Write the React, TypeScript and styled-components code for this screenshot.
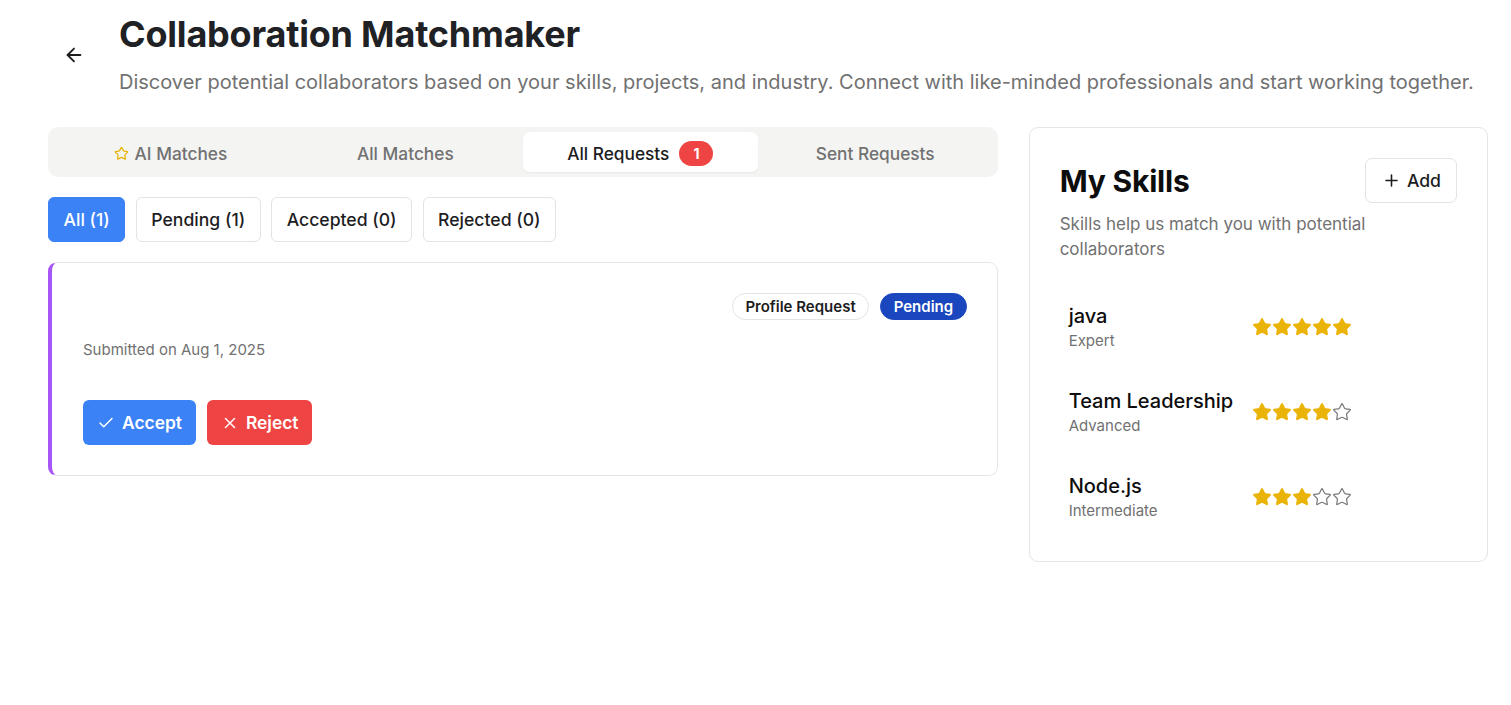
import React from "react";
import styled, { createGlobalStyle } from "styled-components";
import { ArrowLeft, Star, Check, X, Plus } from "lucide-react";

const GlobalStyle = createGlobalStyle`
  * { box-sizing: border-box; }
  body {
    margin: 0;
    background: #ffffff;
    font-family: Inter, "Noto Sans", "Liberation Sans", sans-serif;
    color: #1d1d1f;
  }
`;

const Page = styled.div`
  padding: 14px 23px 40px 48px;
`;

const Header = styled.header`
  display: flex;
  align-items: center;
  gap: 26px;
  padding-left: 7px;
`;

const BackButton = styled.button`
  width: 38px;
  height: 38px;
  display: flex;
  align-items: center;
  justify-content: center;
  border: none;
  background: transparent;
  color: #1d1d1f;
  padding: 0;
`;

const TitleBlock = styled.div`
  display: flex;
  flex-direction: column;
  gap: 14px;
`;

const Title = styled.h1`
  margin: 0;
  font-size: 36px;
  line-height: 40px;
  font-weight: 700;
  color: #202124;
  letter-spacing: -0.2px;
`;

const Subtitle = styled.p`
  margin: 0;
  font-size: 20px;
  line-height: 28px;
  color: #717171;
`;

const Grid = styled.div`
  display: grid;
  grid-template-columns: repeat(3, 1fr);
  gap: 31px;
  margin-top: 31px;
  align-items: start;
`;

const MainColumn = styled.div`
  grid-column: span 2;
  display: flex;
  flex-direction: column;
`;

const TabBar = styled.div`
  display: grid;
  grid-template-columns: repeat(4, 1fr);
  height: 50px;
  padding: 5px;
  background: #f4f4f3;
  border-radius: 10px;
`;

const Tab = styled.div<{ $active?: boolean }>`
  display: flex;
  align-items: center;
  justify-content: center;
  gap: 6px;
  padding-top: 2px;
  font-size: 17.3px;
  font-weight: 500;
  border-radius: 7px;
  color: ${(p) => (p.$active ? "#1d1d1f" : "#717171")};
  background: ${(p) => (p.$active ? "#ffffff" : "transparent")};
  box-shadow: ${(p) => (p.$active ? "0 1px 2px rgba(0,0,0,0.05)" : "none")};
`;

const CountBadge = styled.span`
  min-width: 34px;
  height: 25px;
  padding: 0 10px;
  margin-left: 4px;
  border-radius: 13px;
  background: #ef4444;
  color: #fff;
  font-size: 14px;
  font-weight: 700;
  display: inline-flex;
  align-items: center;
  justify-content: center;
`;

const FilterRow = styled.div`
  display: flex;
  gap: 10.5px;
  margin-top: 20px;
`;

const FilterButton = styled.button<{ $active?: boolean }>`
  height: 45px;
  padding: 0 14.5px;
  border-radius: 6px;
  font-family: inherit;
  font-size: 17.6px;
  font-weight: 500;
  border: 1px solid ${(p) => (p.$active ? "#3b82f6" : "#e3e3e3")};
  background: ${(p) => (p.$active ? "#3b82f6" : "#ffffff")};
  color: ${(p) => (p.$active ? "#ffffff" : "#1d1d1f")};
`;

const RequestCard = styled.div`
  margin-top: 20px;
  border: 1px solid #e5e5e5;
  border-left: 4px solid #a855f7;
  border-radius: 9px;
  padding: 30px 30px 30px 31px;
`;

const CardTop = styled.div`
  display: flex;
  justify-content: flex-end;
  gap: 11px;
`;

const Pill = styled.span<{ $tone: "outline" | "blue" }>`
  height: 27px;
  padding: 0 12.5px;
  border-radius: 14px;
  display: inline-flex;
  align-items: center;
  font-size: 15px;
  font-weight: 600;
  border: 1px solid ${(p) => (p.$tone === "blue" ? "#1a47be" : "#e3e3e3")};
  background: ${(p) => (p.$tone === "blue" ? "#1a47be" : "#ffffff")};
  color: ${(p) => (p.$tone === "blue" ? "#ffffff" : "#1d1d1f")};
`;

const Submitted = styled.p`
  margin: 19px 0 0;
  font-size: 15px;
  line-height: 22px;
  color: #717171;
`;

const Actions = styled.div`
  display: flex;
  gap: 11px;
  margin-top: 39px;
`;

const ActionButton = styled.button<{ $kind: "accept" | "reject" }>`
  height: 45px;
  padding: 0 14px;
  display: inline-flex;
  align-items: center;
  gap: 7px;
  border: none;
  border-radius: 6px;
  font-family: inherit;
  font-size: 17.4px;
  font-weight: 600;
  color: #ffffff;
  background: ${(p) => (p.$kind === "accept" ? "#3b82f6" : "#ef4444")};
`;

const SideCard = styled.aside`
  border: 1px solid #e5e5e5;
  border-radius: 9px;
  padding: 30px;
`;

const SideHeader = styled.div`
  display: flex;
  align-items: center;
  justify-content: space-between;
`;

const SideTitle = styled.h2`
  margin: 0;
  font-size: 30px;
  font-weight: 700;
  color: #0d0d0d;
  letter-spacing: -0.2px;
`;

const AddButton = styled.button`
  height: 45px;
  padding: 0 15px 0 16px;
  display: inline-flex;
  align-items: center;
  gap: 6px;
  border: 1px solid #e3e3e3;
  border-radius: 7px;
  background: #fff;
  font-family: inherit;
  font-size: 17.6px;
  font-weight: 500;
  color: #1d1d1f;
`;

const SideText = styled.p`
  margin: 9px 0 0;
  font-size: 17px;
  line-height: 25px;
  color: #717171;
`;

const SkillList = styled.div`
  display: flex;
  flex-direction: column;
  gap: 16px;
  margin-top: 30px;
`;

const SkillRow = styled.div`
  display: grid;
  grid-template-columns: 163px auto;
  gap: 20px;
  align-items: center;
  padding: 10px 9px;
`;

const SkillName = styled.div`
  font-size: 20px;
  line-height: 28px;
  font-weight: 500;
  color: #0d0d0d;
  white-space: nowrap;
`;

const SkillLevel = styled.div`
  font-size: 15px;
  line-height: 21px;
  color: #717171;
`;

const Stars = styled.div`
  display: flex;
`;

const skills = [
  { name: "java", level: "Expert", rating: 5 },
  { name: "Team Leadership", level: "Advanced", rating: 4 },
  { name: "Node.js", level: "Intermediate", rating: 3 },
];

const App = () => {
  return (
    <Page>
      <GlobalStyle />
      <Header>
        <BackButton aria-label="Back">
          <ArrowLeft size={22} strokeWidth={2} />
        </BackButton>
        <TitleBlock>
          <Title>Collaboration Matchmaker</Title>
          <Subtitle>
            Discover potential collaborators based on your skills, projects, and industry. Connect with
            like-minded professionals and start working together.
          </Subtitle>
        </TitleBlock>
      </Header>
      <Grid>
        <MainColumn>
          <TabBar>
            <Tab>
              <Star size={15} color="#eab308" strokeWidth={2} />
              AI Matches
            </Tab>
            <Tab>All Matches</Tab>
            <Tab $active>
              All Requests <CountBadge>1</CountBadge>
            </Tab>
            <Tab>Sent Requests</Tab>
          </TabBar>
          <FilterRow>
            <FilterButton $active>All (1)</FilterButton>
            <FilterButton>Pending (1)</FilterButton>
            <FilterButton>Accepted (0)</FilterButton>
            <FilterButton>Rejected (0)</FilterButton>
          </FilterRow>
          <RequestCard>
            <CardTop>
              <Pill $tone="outline">Profile Request</Pill>
              <Pill $tone="blue">Pending</Pill>
            </CardTop>
            <Submitted>Submitted on Aug 1, 2025</Submitted>
            <Actions>
              <ActionButton $kind="accept">
                <Check size={18} strokeWidth={2} />
                Accept
              </ActionButton>
              <ActionButton $kind="reject">
                <X size={18} strokeWidth={2} />
                Reject
              </ActionButton>
            </Actions>
          </RequestCard>
        </MainColumn>
        <SideCard>
          <SideHeader>
            <SideTitle>My Skills</SideTitle>
            <AddButton>
              <Plus size={19} strokeWidth={2} />
              Add
            </AddButton>
          </SideHeader>
          <SideText>Skills help us match you with potential collaborators</SideText>
          <SkillList>
            {skills.map((s) => (
              <SkillRow key={s.name}>
                <div>
                  <SkillName>{s.name}</SkillName>
                  <SkillLevel>{s.level}</SkillLevel>
                </div>
                <Stars>
                  {[1, 2, 3, 4, 5].map((i) => (
                    <Star
                      key={i}
                      size={20}
                      strokeWidth={1.5}
                      color={i <= s.rating ? "#eab308" : "#7a7a7a"}
                      fill={i <= s.rating ? "#eab308" : "none"}
                    />
                  ))}
                </Stars>
              </SkillRow>
            ))}
          </SkillList>
        </SideCard>
      </Grid>
    </Page>
  );
};

export default App;
